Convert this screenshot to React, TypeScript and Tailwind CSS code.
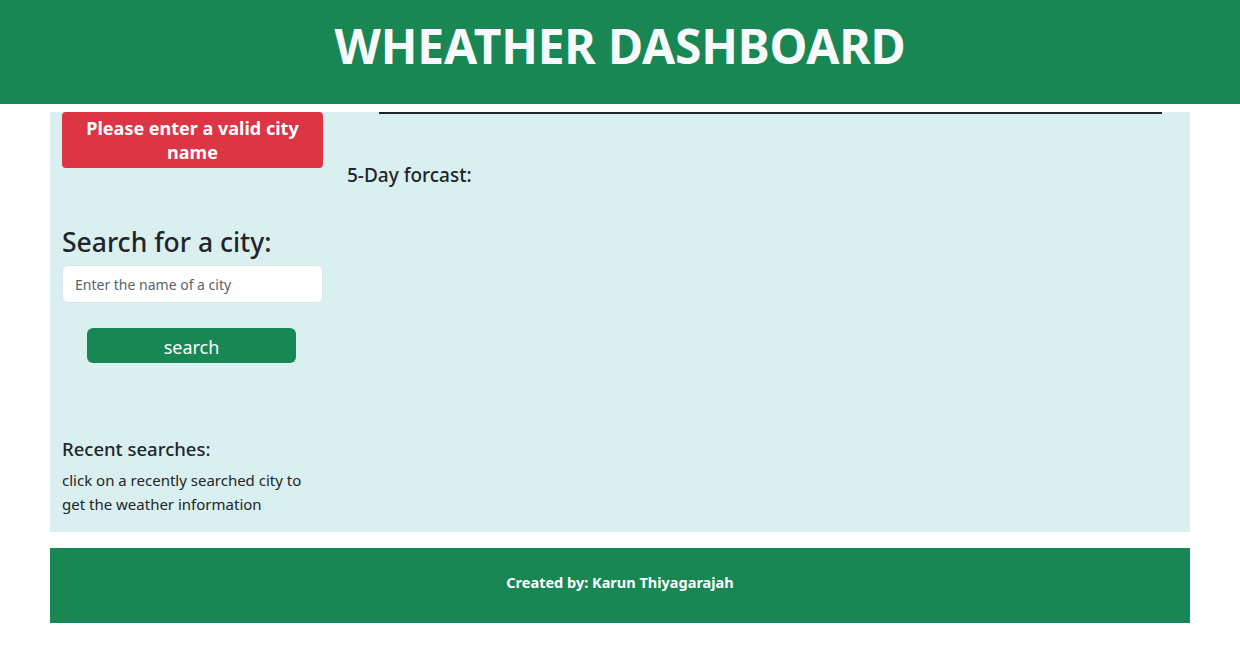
export default function App() {
  return (
    <div className="min-h-screen bg-white text-[#212529]" style={{ fontFamily: "'Noto Sans', 'Open Sans', sans-serif" }}>
      {/* header */}
      <header className="h-[104px] bg-[#198754] flex items-center justify-center">
        <h1 className="text-[48px] font-bold text-[#f8f9fa] leading-none -mt-[12px] tracking-[-0.2px]">WHEATHER DASHBOARD</h1>
      </header>

      <main className="mx-[50px] mt-[8px] h-[420px] bg-[#daeff0] flex">
        {/* left column */}
        <section className="w-[285px] px-[12px] flex flex-col">
          <div className="bg-[#dc3545] rounded-[4px] h-[56px] flex items-center justify-center text-center text-white font-bold text-[18px] leading-[24px] px-4">
            Please enter a valid city name
          </div>
          <h2 className="mt-[58px] text-[26.5px] leading-[32px] font-medium">Search for a city:</h2>
          <input
            className="mt-[7px] h-[38px] w-full bg-white border border-[#dee2e6] rounded-[6px] px-[12px] text-[14px] placeholder:text-[#5c636a] outline-none"
            placeholder="Enter the name of a city"
          />
          <button className="mt-[25px] ml-[25px] w-[209px] h-[35px] pt-[3px] bg-[#198754] rounded-[6px] text-white text-[18px]">search</button>
          <h3 className="mt-[74px] text-[18.5px] leading-[24px] font-medium">Recent searches:</h3>
          <p className="mt-[7px] text-[15px] leading-[24px]">click on a recently searched city to get the weather information</p>
        </section>

        {/* right column */}
        <section className="flex-1 px-[12px] flex flex-col">
          <div className="ml-[32px] mr-[16px] h-[2px] bg-[#212529]" />
          <h4 className="mt-[49px] text-[19px] leading-[24px] font-medium">5-Day forcast:</h4>
        </section>
      </main>

      <footer className="mx-[50px] mt-[16px] h-[75px] bg-[#198754] flex items-center justify-center">
        <p className="text-white font-bold text-[14.5px] -mt-[6px]">Created by: Karun Thiyagarajah</p>
      </footer>
    </div>
  );
}
